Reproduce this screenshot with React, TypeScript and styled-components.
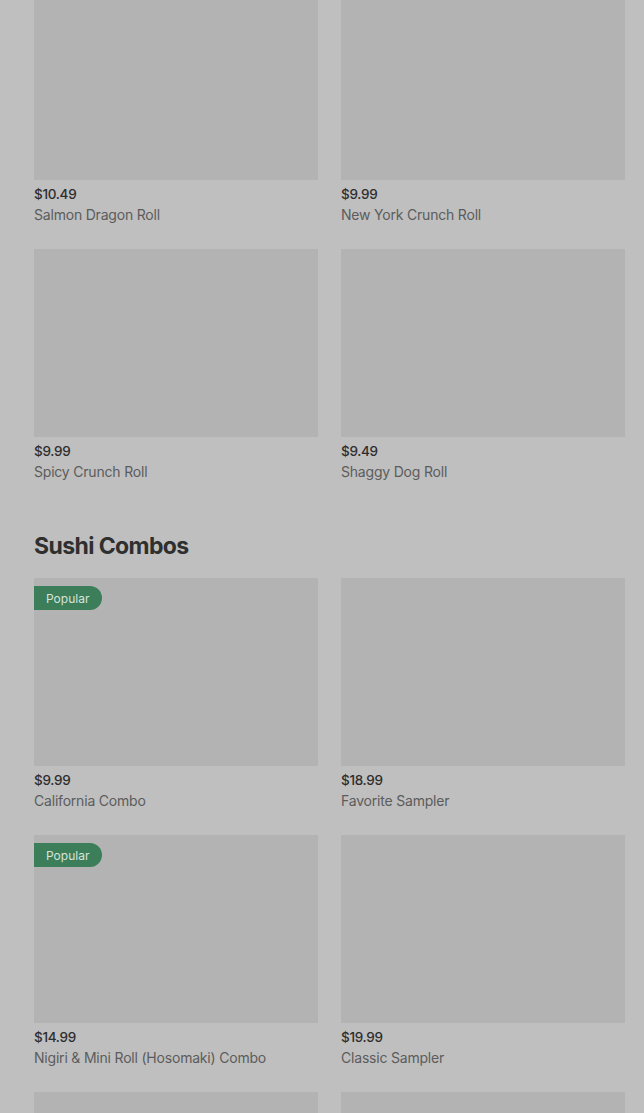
import styled, { createGlobalStyle } from "styled-components";

const GlobalStyle = createGlobalStyle`
  html, body {
    margin: 0;
    padding: 0;
    background: #bfbfbf;
    font-family: Inter, "Noto Sans", Arial, sans-serif;
    overflow: hidden;
  }
`;

const Page = styled.main`
  padding: 0 20px 0 34px;
  margin-top: -8px;
  height: 1121px;
  overflow: hidden;
`;

const Section = styled.section`
  & + & {
    margin-top: 47px;
  }
`;

const Heading = styled.h2`
  margin: 0 0 16px;
  font-size: 23px;
  line-height: 32px;
  font-weight: 700;
  letter-spacing: -0.6px;
  color: #2f2f2f;
`;

const Grid = styled.div`
  display: grid;
  grid-template-columns: 284px 284px;
  column-gap: 23px;
  row-gap: 23px;
`;

const Card = styled.div`
  display: flex;
  flex-direction: column;
`;

const Thumb = styled.div`
  position: relative;
  height: 188px;
  background: #b3b3b3;
`;

const Badge = styled.span`
  position: absolute;
  top: 8px;
  left: 0;
  height: 24px;
  padding: 0 13px 0 12px;
  display: flex;
  align-items: center;
  border-radius: 0 12px 12px 0;
  background: #3c7d5a;
  color: #d6e4dc;
  font-size: 12px;
`;

const Price = styled.div`
  margin-top: 4px;
  font-size: 13.5px;
  line-height: 20px;
  font-weight: 500;
  letter-spacing: -0.3px;
  color: #2e2e2e;
`;

const Name = styled.div`
  font-size: 14px;
  line-height: 22px;
  letter-spacing: -0.2px;
  color: #5c5c5c;
`;

interface IItem {
  price: string;
  name: string;
  popular?: boolean;
}

const rolls: IItem[] = [
  { price: "$10.49", name: "Salmon Dragon Roll" },
  { price: "$9.99", name: "New York Crunch Roll" },
  { price: "$9.99", name: "Spicy Crunch Roll" },
  { price: "$9.49", name: "Shaggy Dog Roll" },
];

const combos: IItem[] = [
  { price: "$9.99", name: "California Combo", popular: true },
  { price: "$18.99", name: "Favorite Sampler" },
  { price: "$14.99", name: "Nigiri & Mini Roll (Hosomaki) Combo", popular: true },
  { price: "$19.99", name: "Classic Sampler" },
  { price: "", name: "" },
  { price: "", name: "" },
];

function ItemCard({ price, name, popular }: IItem) {
  return (
    <Card>
      <Thumb>{popular && <Badge>Popular</Badge>}</Thumb>
      <Price>{price}</Price>
      <Name>{name}</Name>
    </Card>
  );
}

function App() {
  return (
    <>
      <GlobalStyle />
      <Page>
        <Section>
          <Grid>
            {rolls.map((item, i) => (
              <ItemCard key={i} {...item} />
            ))}
          </Grid>
        </Section>
        <Section>
          <Heading>Sushi Combos</Heading>
          <Grid>
            {combos.map((item, i) => (
              <ItemCard key={i} {...item} />
            ))}
          </Grid>
        </Section>
      </Page>
    </>
  );
}

export default App;
